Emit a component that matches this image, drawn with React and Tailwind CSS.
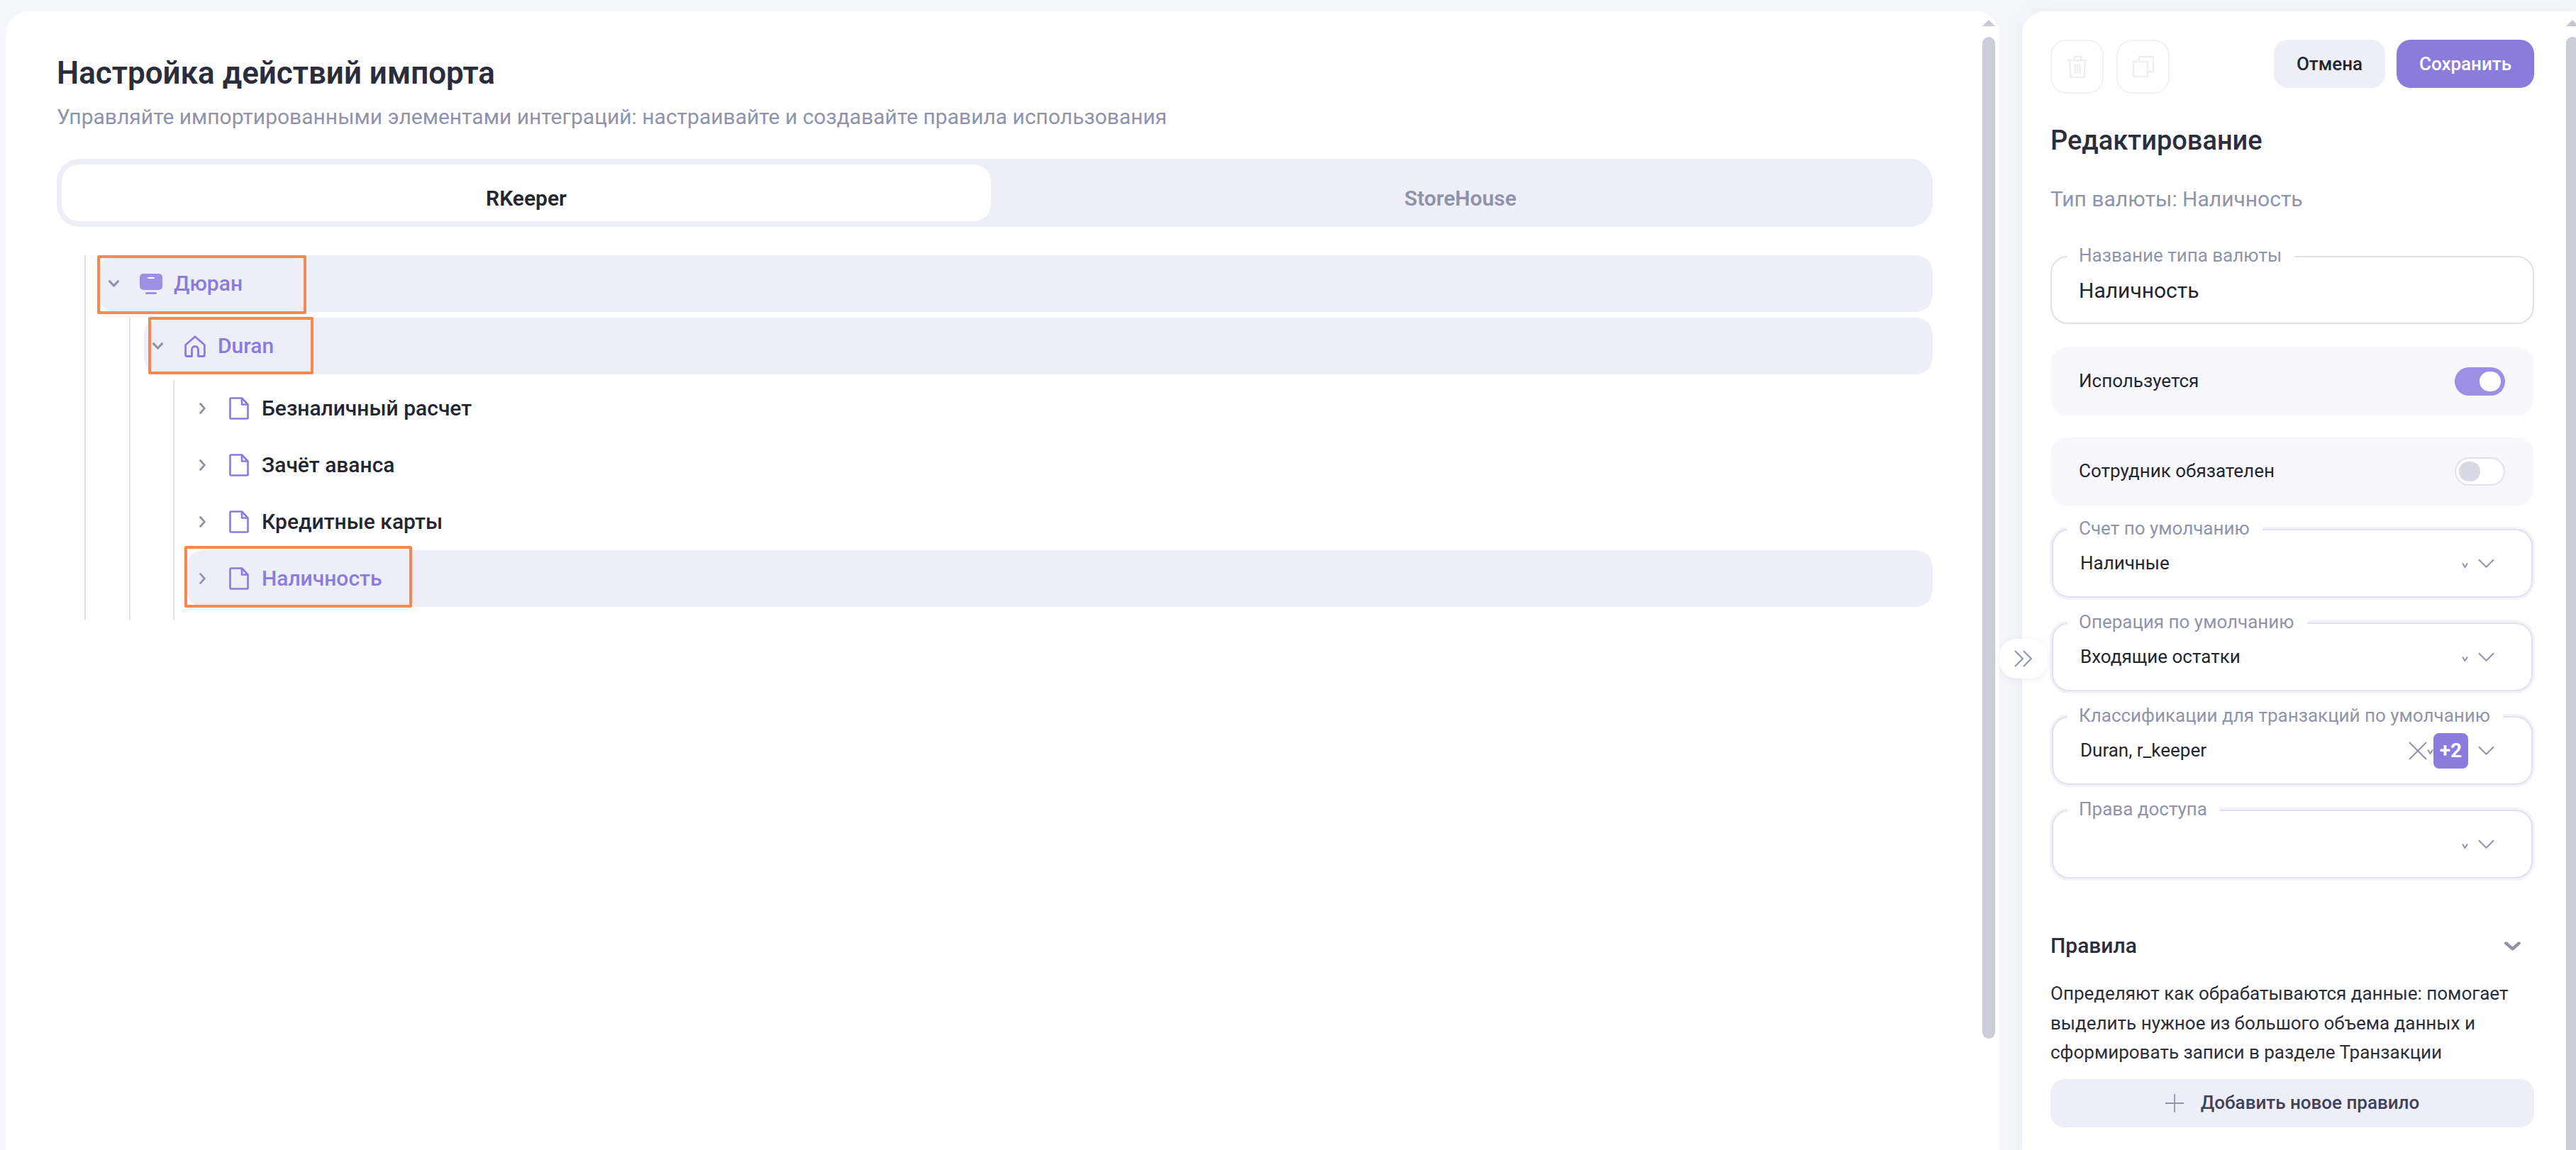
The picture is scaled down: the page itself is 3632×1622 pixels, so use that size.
const ChevDown = ({ className = "w-[15px] h-[10px]", sw = 3.2 }) => (
  <svg viewBox="0 0 15 10" className={className} fill="none" stroke="#8f92a9" strokeWidth={sw} strokeLinecap="round" strokeLinejoin="round" preserveAspectRatio="none">
    <path d="M1.6 1.8 7.5 8 13.4 1.8" />
  </svg>
);
const ChevRight = () => (
  <svg viewBox="0 0 9 16" className="w-[9px] h-[16px]" fill="none" stroke="#8f92a9" strokeWidth="2.8" strokeLinecap="round" strokeLinejoin="round">
    <path d="M1.6 1.6 7.4 8 1.6 14.4" />
  </svg>
);
const Monitor = () => (
  <svg viewBox="0 0 32 29" className="w-[32px] h-[29px]">
    <rect x="0" y="0" width="32" height="23" rx="5" fill="#9d8fe3" />
    <rect x="11" y="5" width="10" height="2" rx="1" fill="#ffffff" />
    <rect x="8" y="26" width="16" height="3" rx="1.5" fill="#9d8fe3" />
  </svg>
);
const Home = () => (
  <svg viewBox="0 0 30 31" className="w-[30px] h-[31px]" fill="none" stroke="#8b7bdc" strokeWidth="2.8" strokeLinejoin="round">
    <path d="M1.6 13.5 15 1.8l13.4 11.7V27.5a2 2 0 0 1-2 2H19.5V20a4.5 4.5 0 0 0-9 0v9.5H3.6a2 2 0 0 1-2-2Z" />
  </svg>
);
const FileIcon = () => (
  <svg viewBox="0 0 28 32" className="w-[28px] h-[32px]" fill="none" stroke="#8b7bdc" strokeWidth="2.6" strokeLinejoin="round">
    <path d="M1.5 2.5a1 1 0 0 1 1-1H18L26.5 10.500V29.500a1 1 0 0 1-1 1H2.500a1 1 0 0 1-1-1Z" />
    <path d="M18 1.500V10.500H26.500" />
  </svg>
);
const Mark = ({ className }) => (
  <div className={`absolute border-[4px] border-[#f7894f] rounded-[2px] ${className}`} />
);

const Row = ({ active, mark, chevBox, gap1, gap2, chev, icon, label }) => (
  <div className={`relative flex items-center h-[80px] rounded-[24px] ${active ? "bg-[#eeeef8]" : ""}`}>
    <div className={`flex items-center justify-center shrink-0 ${chevBox}`}>{chev}</div>
    <div className={`flex items-center shrink-0 ${gap1}`}>{icon}</div>
    <span className={`text-[30px] leading-[40px] font-medium ${gap2} ${active ? "text-[#8b7bdc]" : "text-[#24262f]"}`}>{label}</span>
    {mark}
  </div>
);

const SmallChev = ({ className }) => (
  <svg viewBox="0 0 9 9" className={`w-[9px] h-[9px] ${className}`} fill="none" stroke="#8f92a9" strokeWidth="2">
    <path d="M1 1.500 4.500 7 8 1.500" />
  </svg>
);

const Select = ({ label, value, extra, className }) => (
  <fieldset className={`mx-[2px] border-2 border-[#e0e0ee] rounded-[24px] shadow-[0_0_0_3px_#f2f2f9] ${className}`}>
    <legend className="ml-[20px] pl-[16px] pr-[18px] pb-[4px] bg-white text-[26px] leading-[26px] text-[#9093aa]">{label}</legend>
    <div className="flex items-center h-[64px] pl-[38px] pr-[52px] mb-[15px]">
      <span className="flex-1 text-[26px] leading-[32px] text-[#24262f]">{value}</span>
      {extra ? (
        <div className="relative flex items-center mr-[14px] mt-[2px]">
          <svg viewBox="0 0 26 26" className="w-[26px] h-[26px] mr-[9px]" fill="none" stroke="#8f92a9" strokeWidth="2">
            <path d="M1 1 25 25M25 1 1 25" />
          </svg>
          <SmallChev className="absolute left-[26px] top-[22px]" />
          <div className="relative flex items-center justify-center w-[49px] h-[50px] rounded-[8px] bg-[#8b7bdc] text-white text-[28px] font-bold">+2</div>
        </div>
      ) : (
        <SmallChev className="mr-[14px] mt-[6px]" />
      )}
      <svg viewBox="0 0 24 13" className="w-[23px] h-[13px]" fill="none" stroke="#8f92a9" strokeWidth="2">
        <path d="M1 1 12 12 23 1" />
      </svg>
    </div>
  </fieldset>
);

const Toggle = ({ on }) =>
  on ? (
    <div className="flex items-center justify-end w-[71px] h-[40px] rounded-full bg-[#9d8fe3] pr-[6px]">
      <div className="w-[30px] h-[28px] rounded-full bg-white" />
    </div>
  ) : (
    <div className="flex items-center w-[71px] h-[40px] rounded-full bg-white border-2 border-[#e2e2ec] pl-[4px]">
      <div className="w-[30px] h-[28px] rounded-full bg-[#d9d9e6]" />
    </div>
  );

const SwitchRow = ({ label, on, className }) => (
  <div className={`flex items-center justify-between h-[96px] rounded-[24px] bg-[#f8f8fc] pl-[40px] pr-[41px] ${className}`}>
    <span className="pb-[2px] text-[26px] leading-[32px] text-[#24262f]">{label}</span>
    <Toggle on={on} />
  </div>
);

const Scrollbar = ({ thumb }) => (
  <div className="flex flex-col items-center w-[18px] shrink-0 pt-[12px]">
    <div className="w-0 h-0 border-x-[9px] border-x-transparent border-b-[9px] border-b-[#c8c8d4]" />
    <div className={`w-[18px] mt-[15px] rounded-full bg-[#cdcdd9] ${thumb}`} />
  </div>
);

export default function App() {
  return (
    <div className="relative flex items-start w-[3632px] h-[1622px] overflow-hidden bg-[#f5f6fa] pl-[8px] pt-[16px] font-[family-name:Roboto,sans-serif]">
      <div className="flex w-[2811px] h-[1606px] shrink-0 rounded-t-[32px] bg-white pl-[72px] pr-[6px]">
        <div className="flex-1 min-w-0 pr-[70px]">
          <h1 className="mt-[63px] text-[44px] leading-[48px] font-semibold text-[#2b2d3a]">Настройка действий импорта</h1>
          <p className="mt-[18px] text-[30px] leading-[40px] text-[#9093aa]">Управляйте импортированными элементами интеграций: настраивайте и создавайте правила использования</p>
          <div className="flex mt-[39px] h-[96px] rounded-[32px] bg-[#eeeef8] py-[8px] pl-[7px] pr-[4px]">
            <div className="flex items-center justify-center w-[1310px] pt-[14px] rounded-[24px] bg-white text-[30px] font-semibold text-[#24262f]">RKeeper</div>
            <div className="flex flex-1 items-center justify-center pt-[14px] text-[30px] font-semibold text-[#8f92a9]">StoreHouse</div>
          </div>
          <div className="mt-[40px] ml-[39px] border-l-2 border-[#e2e2f6] pl-[18px]">
            <Row
              active
              chevBox="w-[42px]"
              gap1="ml-[16px]"
              gap2="ml-[16px]"
              chev={<ChevDown />}
              icon={<Monitor />}
              label="Дюран"
              mark={<Mark className="-left-[2px] top-0 w-[295px] h-[83px]" />}
            />
            <div className="mt-[8px] ml-[43px] border-l-2 border-[#e2e2f6] pl-[19px]">
              <Row
                active
                chevBox="w-[38px]"
                gap1="ml-[19px]"
                gap2="ml-[17px]"
                chev={<ChevDown />}
                icon={<Home />}
                label="Duran"
                mark={<Mark className="left-[6px] -top-[1px] w-[233px] h-[81px]" />}
              />
              <div className="mt-[8px] ml-[41px] border-l-2 border-[#e2e2f6] pl-[17px] pb-[19px]">
                <Row chevBox="w-[44px]" gap1="ml-[16px]" gap2="ml-[18px]" chev={<ChevRight />} icon={<FileIcon />} label="Безналичный расчет" />
                <Row chevBox="w-[44px]" gap1="ml-[16px]" gap2="ml-[18px]" chev={<ChevRight />} icon={<FileIcon />} label="Зачёт аванса" />
                <Row chevBox="w-[44px]" gap1="ml-[16px]" gap2="ml-[18px]" chev={<ChevRight />} icon={<FileIcon />} label="Кредитные карты" />
                <Row
                  active
                  chevBox="w-[44px]"
                  gap1="ml-[16px]"
                  gap2="ml-[18px]"
                  chev={<ChevRight />}
                  icon={<FileIcon />}
                  label="Наличность"
                  mark={<Mark className="-left-[3px] -top-[6px] w-[321px] h-[87px]" />}
                />
              </div>
            </div>
          </div>
        </div>
        <Scrollbar thumb="h-[1413px]" />
      </div>

      <div className="flex w-[781px] h-[1606px] shrink-0 ml-[32px] rounded-tl-[32px] bg-white shadow-[0_0_24px_rgba(120,120,160,0.08)] pl-[40px] overflow-hidden">
        <div className="w-[682px] shrink-0">
          <div className="flex items-start mt-[40px]">
            <div className="flex items-center justify-center w-[75px] h-[76px] rounded-[22px] border-2 border-[#f1f1f5]">
              <svg viewBox="0 0 30 32" className="w-[30px] h-[32px]" fill="none" stroke="#eeeef2" strokeWidth="2.4" strokeLinejoin="round">
                <path d="M1 7h28M10 7V2h10v5M4 7l1.500 24h19L26 7M11.500 12v14M15 12v14M18.500 12v14" />
              </svg>
            </div>
            <div className="flex items-center justify-center w-[75px] h-[76px] ml-[18px] rounded-[22px] border-2 border-[#f1f1f5]">
              <svg viewBox="0 0 30 30" className="w-[30px] h-[30px]" fill="none" stroke="#eeeef2" strokeWidth="2.4">
                <path d="M9 8V1h20v21h-8" />
                <rect x="1" y="8" width="20" height="21" />
              </svg>
            </div>
            <button className="ml-auto w-[157px] h-[68px] rounded-[20px] bg-[#eeeef8] text-[26px] font-medium text-[#24262f]">Отмена</button>
            <button className="ml-[16px] w-[194px] h-[68px] rounded-[20px] bg-[#8b7bdc] text-[26px] font-medium text-white">Сохранить</button>
          </div>
          <h2 className="mt-[44px] text-[38px] leading-[44px] font-medium text-[#2b2d3a]">Редактирование</h2>
          <p className="mt-[43px] text-[30px] leading-[36px] text-[#9093aa]">Тип валюты: Наличность</p>

          <fieldset className="mt-[48px] border-2 border-[#e0e0e8] rounded-[24px]">
            <legend className="ml-[22px] pl-[16px] pr-[18px] pb-[4px] bg-white text-[26px] leading-[26px] text-[#9093aa]">Название типа валюты</legend>
            <div className="flex items-center h-[66px] mb-[12px] pl-[38px] text-[30px] leading-[40px] text-[#24262f]">Наличность</div>
          </fieldset>

          <SwitchRow className="mt-[33px]" label="Используется" on />
          <SwitchRow className="mt-[31px]" label="Сотрудник обязателен" />

          <Select className="mt-[19px]" label="Счет по умолчанию" value="Наличные" />
          <Select className="mt-[21px]" label="Операция по умолчанию" value="Входящие остатки" />
          <Select className="mt-[21px]" label="Классификации для транзакций по умолчанию" value="Duran, r_keeper" extra />
          <Select className="mt-[21px]" label="Права доступа" value="" />

          <div className="flex items-center justify-between mt-[75px] pr-[19px]">
            <span className="text-[30px] leading-[40px] font-medium text-[#2b2d3a]">Правила</span>
            <ChevDown className="w-[23px] h-[13px]" sw={3.2} />
          </div>
          <p className="mt-[27px] text-[26px] leading-[41.500px] text-[#2b2d3a]">
            Определяют как обрабатываются данные: помогает выделить нужное из большого объема данных и сформировать записи в разделе Транзакции
          </p>
          <button className="flex items-center justify-center w-full h-[68px] mt-[16px] rounded-[20px] bg-[#eeeef8] text-[26px] font-medium text-[#3f4159]">
            <svg viewBox="0 0 26 26" className="w-[26px] h-[26px] mr-[24px]" fill="none" stroke="#8f92a9" strokeWidth="1.800">
              <path d="M13 0v26M0 13h26" />
            </svg>
            Добавить новое правило
          </button>
        </div>
        <div className="ml-[45px]">
          <Scrollbar thumb="h-[1700px]" />
        </div>
      </div>

      <button className="absolute left-[2819px] top-[901px] flex items-center justify-center w-[68px] h-[56px] rounded-[24px] bg-white shadow-[0_2px_10px_rgba(120,120,160,0.12)]">
        <svg viewBox="0 0 26 24" className="w-[26px] h-[24px]" fill="none" stroke="#8f92a9" strokeWidth="2">
          <path d="M1 1 12 12 1 23M13 1 24 12 13 23" />
        </svg>
      </button>
    </div>
  );
}
